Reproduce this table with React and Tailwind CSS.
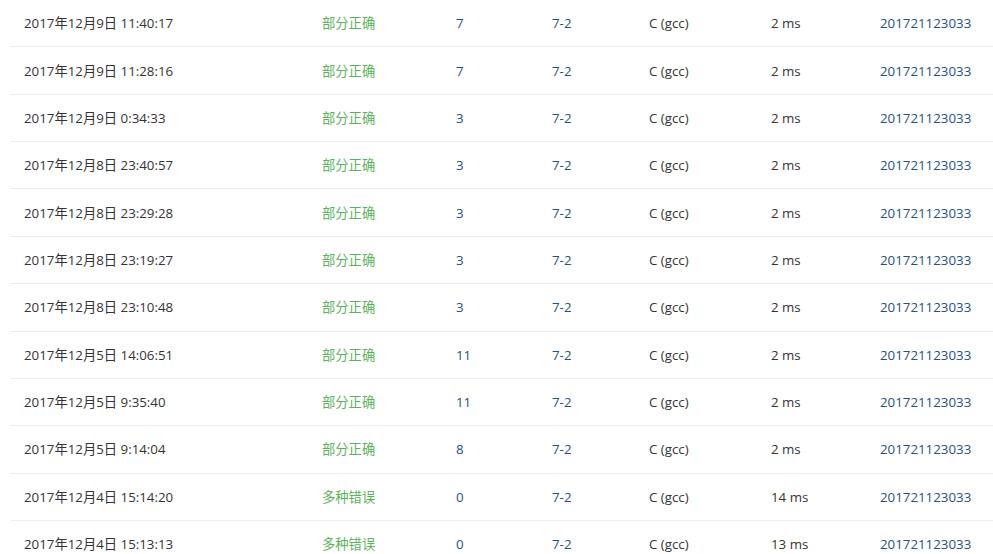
const rows = [
  ['2017年12月9日 11:40:17', '部分正确', '7', '2 ms'],
  ['2017年12月9日 11:28:16', '部分正确', '7', '2 ms'],
  ['2017年12月9日 0:34:33', '部分正确', '3', '2 ms'],
  ['2017年12月8日 23:40:57', '部分正确', '3', '2 ms'],
  ['2017年12月8日 23:29:28', '部分正确', '3', '2 ms'],
  ['2017年12月8日 23:19:27', '部分正确', '3', '2 ms'],
  ['2017年12月8日 23:10:48', '部分正确', '3', '2 ms'],
  ['2017年12月5日 14:06:51', '部分正确', '11', '2 ms'],
  ['2017年12月5日 9:35:40', '部分正确', '11', '2 ms'],
  ['2017年12月5日 9:14:04', '部分正确', '8', '2 ms'],
  ['2017年12月4日 15:14:20', '多种错误', '0', '14 ms'],
  ['2017年12月4日 15:13:13', '多种错误', '0', '13 ms'],
];

export default function App() {
  return (
    <div
      className="w-[993px] h-[554px] overflow-hidden bg-white pl-[10px] text-[13.3px] text-[#333]"
      style={{ fontFamily: '"Open Sans", "Noto Sans CJK SC", sans-serif' }}
    >
      {rows.map(([time, status, score, used], i) => (
        <div
          key={i}
          className="grid h-[47.36px] grid-cols-[298px_134px_96px_97px_122px_109px_1fr] items-center border-b border-[#ececec] pl-[14px] pt-[2px]"
        >
          <span>{time}</span>
          <span className="text-[#5cb25c]">{status}</span>
          <span className="text-[#27507f]">{score}</span>
          <span className="text-[#27507f]">7-2</span>
          <span>C (gcc)</span>
          <span>{used}</span>
          <span className="text-[#27507f]">201721123033</span>
        </div>
      ))}
    </div>
  );
}
